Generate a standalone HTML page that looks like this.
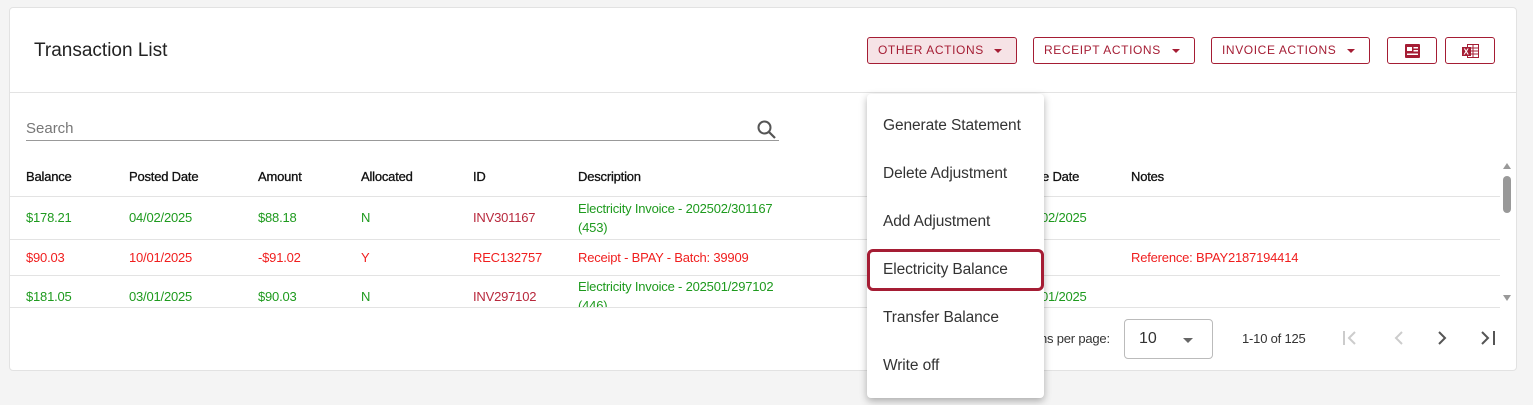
<!DOCTYPE html>
<html><head><style>
*{box-sizing:border-box;margin:0;padding:0}
body{width:1533px;height:405px;background:#f4f4f4;font-family:"Liberation Sans",sans-serif;position:relative;overflow:hidden;color:#222}
.card{position:absolute;left:9px;top:7px;width:1508px;height:364px;background:#fff;border:1px solid #e2e2e2;border-radius:4px}
.abs{position:absolute;white-space:nowrap}
.btn{position:absolute;top:37px;height:27px;border:1px solid #a51d34;border-radius:3px;color:#a51d34;font-size:12px;letter-spacing:.6px;line-height:25px;padding-left:10px}
.btn .c{position:absolute;right:14px;top:11px;border-left:4px solid transparent;border-right:4px solid transparent;border-top:4px solid #a51d34}
.t{font-size:13px;letter-spacing:-.2px}
.h{color:#111;-webkit-text-stroke:.3px #111}
.g{color:#1e9a1e}.r{color:#f01e1e}.m{color:#b8283c}
.line{position:absolute;left:10px;width:1490px;height:1px;background:#e3e3e3}
.menu{position:absolute;left:867px;top:94px;width:177px;height:304px;background:#fff;border-radius:4px;box-shadow:0 3px 8px rgba(0,0,0,.3)}
.menu div{position:absolute;left:16px;font-size:15.5px;color:#333;letter-spacing:-.1px}
</style></head><body>
<div class="card"></div>
<div class="abs" style="left:34px;top:40px;font-size:19px;color:#222">Transaction List</div>
<div class="btn" style="left:867px;width:150px;background:#f6e3e6">OTHER ACTIONS<span class="c"></span></div>
<div class="btn" style="left:1033px;width:162px">RECEIPT ACTIONS<span class="c"></span></div>
<div class="btn" style="left:1211px;width:159px">INVOICE ACTIONS<span class="c"></span></div>
<div class="btn" style="left:1387px;width:50px;padding:0">
<svg style="position:absolute;left:17px;top:6px" width="15" height="14"><rect x="0" y="0" width="15" height="14" rx="1" fill="#a51d34"/><rect x="2" y="3" width="5" height="4" fill="#fff"/><rect x="8.5" y="3" width="4.5" height="1.5" fill="#fff"/><rect x="8.5" y="6" width="4.5" height="1.5" fill="#fff"/><rect x="2" y="9.5" width="11" height="1.5" fill="#fff"/></svg></div>
<div class="btn" style="left:1445px;width:50px;padding:0">
<svg style="position:absolute;left:16px;top:5px" width="18" height="16"><g stroke="#a51d34" fill="none" stroke-width="1"><rect x="5.5" y="1.5" width="11" height="13"/><line x1="5" y1="5" x2="17" y2="5"/><line x1="5" y1="8" x2="17" y2="8"/><line x1="5" y1="11" x2="17" y2="11"/><line x1="11" y1="1" x2="11" y2="15"/></g><rect x="0" y="4" width="9" height="9" fill="#a51d34"/><text x="1.5" y="11.5" font-size="8" fill="#fff" font-family="Liberation Sans" font-weight="bold">X</text></svg></div>
<div class="line" style="top:92px;left:10px;width:1506px"></div>
<div class="abs" style="left:26px;top:120px;font-size:15px;color:#777">Search</div>
<div class="abs" style="left:26px;top:140px;width:753px;height:1px;background:#999"></div>
<svg class="abs" style="left:756px;top:119px" width="22" height="22"><circle cx="8.5" cy="8.5" r="6" stroke="#555" stroke-width="2" fill="none"/><line x1="13" y1="13" x2="19" y2="19" stroke="#555" stroke-width="2.2"/></svg>
<div class="t h abs" style="top:169px;left:26px">Balance</div>
<div class="t h abs" style="top:169px;left:129px">Posted Date</div>
<div class="t h abs" style="top:169px;left:258px">Amount</div>
<div class="t h abs" style="top:169px;left:361px">Allocated</div>
<div class="t h abs" style="top:169px;left:473px">ID</div>
<div class="t h abs" style="top:169px;left:578px">Description</div>
<div class="t h abs" style="top:169px;left:1042px">e Date</div>
<div class="t h abs" style="top:169px;left:1131px">Notes</div>
<div class="line" style="top:196px"></div>
<div class="t abs g" style="top:210px;left:26px">$178.21</div>
<div class="t abs g" style="top:210px;left:129px">04/02/2025</div>
<div class="t abs g" style="top:210px;left:258px">$88.18</div>
<div class="t abs g" style="top:210px;left:361px">N</div>
<div class="t abs m" style="top:210px;left:473px">INV301167</div>
<div class="t abs g" style="top:199px;left:578px;line-height:19px">Electricity Invoice - 202502/301167<br>(453)</div>
<div class="t abs g" style="top:210px;left:1041px">02/2025</div>
<div class="line" style="top:239px"></div>
<div class="t abs r" style="top:250px;left:26px">$90.03</div>
<div class="t abs r" style="top:250px;left:129px">10/01/2025</div>
<div class="t abs r" style="top:250px;left:258px">-$91.02</div>
<div class="t abs r" style="top:250px;left:361px">Y</div>
<div class="t abs r" style="top:250px;left:473px">REC132757</div>
<div class="t abs r" style="top:250px;left:578px">Receipt - BPAY - Batch: 39909</div>
<div class="t abs r" style="top:250px;left:1131px">Reference: BPAY2187194414</div>
<div class="line" style="top:275px"></div>
<div style="position:absolute;left:10px;top:276px;width:1490px;height:31px;overflow:hidden">
<div class="t abs g" style="top:13px;left:16px">$181.05</div>
<div class="t abs g" style="top:13px;left:119px">03/01/2025</div>
<div class="t abs g" style="top:13px;left:248px">$90.03</div>
<div class="t abs g" style="top:13px;left:351px">N</div>
<div class="t abs m" style="top:13px;left:463px">INV297102</div>
<div class="t abs g" style="top:1px;left:568px;line-height:19px">Electricity Invoice - 202501/297102<br>(446)</div>
<div class="t abs g" style="top:13px;left:1031px">01/2025</div>
</div>
<div class="line" style="top:307px"></div>
<div class="abs" style="left:1503px;top:176px;width:8px;height:37px;background:#999;border-radius:4px"></div>
<div class="abs" style="left:1503px;top:163px;border-left:4px solid transparent;border-right:4px solid transparent;border-bottom:6px solid #999"></div>
<div class="abs" style="left:1503px;top:295px;border-left:4px solid transparent;border-right:4px solid transparent;border-top:6px solid #999"></div>
<div class="t abs" style="top:331px;left:1040px;color:#333">ns per page:</div>
<div class="abs" style="left:1124px;top:319px;width:89px;height:40px;border:1px solid #bbb;border-radius:4px"><span class="abs" style="left:14px;top:10px;font-size:16px;color:#333">10</span><span class="abs" style="left:58px;top:18px;border-left:5px solid transparent;border-right:5px solid transparent;border-top:5px solid #666"></span></div>
<div class="t abs" style="top:331px;left:1242px;color:#333">1-10 of 125</div>
<svg class="abs" style="left:1340px;top:328px" width="160" height="20"><g fill="none" stroke-width="2"><path d="M4 3v14M15 4l-6 6 6 6" stroke="#ccc"/><path d="M62 4l-6 6 6 6" stroke="#ccc"/><path d="M99 4l6 6-6 6" stroke="#555"/><path d="M142 4l6 6-6 6M154 3v14" stroke="#555"/></g></svg>
<div class="menu">
<div style="top:23px">Generate Statement</div>
<div style="top:71px">Delete Adjustment</div>
<div style="top:119px">Add Adjustment</div>
<div style="top:167px">Electricity Balance</div>
<div style="top:215px">Transfer Balance</div>
<div style="top:263px">Write off</div>
</div>
<div class="abs" style="left:867px;top:249px;width:177px;height:42px;border:3px solid #a51d34;border-radius:6px"></div>
</body></html>
